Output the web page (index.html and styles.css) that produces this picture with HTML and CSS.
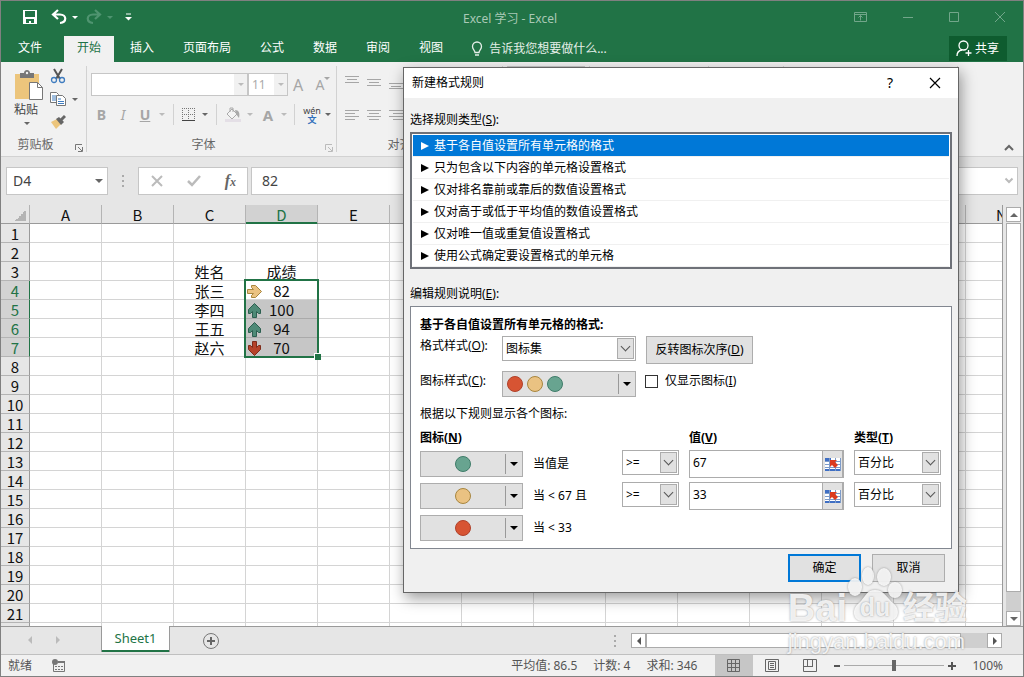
FILE: index.html
```html
<!DOCTYPE html>
<html lang="zh-CN">

<head>
  <meta charset="UTF-8">
  <meta name="viewport" content="width=device-width, initial-scale=1.0">
  <title>Excel 学习 - Excel</title>
  <link rel="stylesheet" href="styles.css">
</head>

<body>
  <div class="app">
    <header class="titlebar">
      <div class="quick-access">
        <button class="icon-btn" aria-label="保存">
          <svg width="16" height="16" viewBox="0 0 16 16"><path d="M1 1h14v14H1z" fill="#fff"/><path d="M3 2h10v6H3zM4 10h8v4H9v-2H7v2H4z" fill="#217346"/></svg>
        </button>
        <button class="icon-btn undo" aria-label="撤消">
          <svg width="16" height="16" viewBox="0 0 16 16"><path d="M7 1L2 5.500l5 4.500M2.500 5.500H9c7 0 7 8 0 8.500" fill="none" stroke="#fff" stroke-width="2.200"/></svg>
          <i class="caret white"></i>
        </button>
        <button class="icon-btn redo" aria-label="恢复">
          <svg width="16" height="16" viewBox="0 0 16 16"><path d="M9 1l5 4.500L9 10M13.500 5.500H7c-7 0-7 8 0 8.500" fill="none" stroke="#4f9470" stroke-width="2.200"/></svg>
          <i class="caret dim"></i>
        </button>
        <button class="icon-btn more" aria-label="自定义快速访问工具栏">
          <svg width="7" height="8" viewBox="0 0 7 8"><path d="M1 1h5" stroke="#fff"/><path d="M0 4h7L3.500 7.500z" fill="#fff"/></svg>
        </button>
      </div>
      <span class="title">Excel 学习 - Excel</span>
      <div class="window-buttons">
        <button class="icon-btn" aria-label="功能区显示选项"><svg width="14" height="12" viewBox="0 0 14 12"><path d="M.5 1.500h12v9H.5zM.5 3.500h12M6.500 9.500v-5M4.500 6.500l2-2 2 2"/></svg></button>
        <button class="icon-btn" aria-label="最小化"><svg width="12" height="12" viewBox="0 0 12 12"><path d="M1 6.500h10"/></svg></button>
        <button class="icon-btn" aria-label="最大化"><svg width="12" height="12" viewBox="0 0 12 12"><path d="M1.500 1.500h9v9h-9z"/></svg></button>
        <button class="icon-btn" aria-label="关闭"><svg width="12" height="12" viewBox="0 0 12 12"><path d="M1 1l10 10M11 1L1 11"/></svg></button>
      </div>
    </header>

    <nav class="tabs">
      <a class="tab file" href="#">文件</a>
      <a class="tab active" href="#">开始</a>
      <a class="tab" href="#">插入</a>
      <a class="tab" href="#">页面布局</a>
      <a class="tab" href="#">公式</a>
      <a class="tab" href="#">数据</a>
      <a class="tab" href="#">审阅</a>
      <a class="tab" href="#">视图</a>
      <a class="tell-me" href="#">
        <svg width="12" height="16" viewBox="0 0 12 16"><path d="M4 11.500c0-2-2.500-3-2.500-6a4.500 4.500 0 0 1 9 0c0 3-2.500 4-2.500 6zM4 14h4" fill="none" stroke="#e4efe8" stroke-width="1.300"/></svg>
        告诉我您想要做什么...
      </a>
      <button class="share">
        <svg width="16" height="17" viewBox="0 0 16 17"><circle cx="7.500" cy="5.500" r="4.500"/><path d="M1 16c0-3.500 2-5.500 5-6M12.500 10v6M9.500 13h6"/></svg>
        共享
      </button>
    </nav>

    <section class="ribbon">
      <div class="group clipboard">
        <div class="tools">
          <button class="paste">
            <svg width="30" height="31" viewBox="0 0 30 31"><path d="M1 4h24v25H1z" fill="#ecc57c"/><path d="M6 3h4c0-4 6-4 6 0h4v5H6z" fill="#777"/><circle cx="13" cy="3" r="1.200" fill="#f1f1f1"/><path d="M15.500 12.500h8l5 5v12h-13z" fill="#fff" stroke="#777"/><path d="M23.500 12.500v5h5" fill="none" stroke="#777"/></svg>
            <span>粘贴</span>
            <i class="caret"></i>
          </button>
          <div class="clip-list">
            <button class="icon-btn" aria-label="剪切"><svg width="16" height="16" viewBox="0 0 16 16"><path d="M4 1l6 10M12 1L6 11" stroke="#555" stroke-width="2"/><circle cx="4" cy="12" r="2.500" fill="none" stroke="#3f7cbf" stroke-width="1.300"/><circle cx="12" cy="12" r="2.500" fill="none" stroke="#3f7cbf" stroke-width="1.300"/></svg></button>
            <button class="icon-btn" aria-label="复制"><svg width="16" height="16" viewBox="0 0 16 16"><path d="M.5 1.500h6l2 2v8h-8z" fill="#fff" stroke="#777"/><path d="M2 5h4M2 7h4M2 9h4" stroke="#3f7cbf"/><path d="M6.500 4.500h6l3 3v7h-9z" fill="#fff" stroke="#777"/><path d="M8 8h3M8 10.500h6M8 12.500h6" stroke="#3f7cbf"/></svg><i class="caret"></i></button>
            <button class="icon-btn" aria-label="格式刷"><svg width="16" height="16" viewBox="0 0 16 16"><path d="M1 8l6-3 4 5-5 5z" fill="#ecc57c"/><path d="M6 5l3-2 5 5-3 3z" fill="#666"/><path d="M11 6l4-4" stroke="#666" stroke-width="3"/></svg></button>
          </div>
        </div>
        <div class="group-name">剪贴板<svg class="launcher" width="8" height="8" viewBox="0 0 8 8"><path d="M.5 6V.5H7M3 3l4 4M7.500 3v4.500H3"/></svg></div>
      </div>

      <div class="group font">
        <div class="tools">
          <div class="tool-row">
            <div class="combo name"><input type="text" aria-label="字体名称"><span class="combo-arrow"><i class="caret light"></i></span></div>
            <div class="combo size"><input type="text" value="11" aria-label="字号"><span class="combo-arrow"><i class="caret light"></i></span></div>
            <button class="letter grow">A<i class="caret mark flip"></i></button>
            <button class="letter shrink">A<i class="caret mark"></i></button>
          </div>
          <div class="tool-row second">
            <button class="letter b">B</button>
            <button class="letter i">I</button>
            <button class="letter u">U</button>
            <i class="caret light"></i>
            <span class="line"></span>
            <button class="icon-btn" aria-label="边框"><svg width="14" height="14" viewBox="0 0 14 14"><path d="M0 .5h13M0 6.500h13M.5 0v12M6.500 0v12M12.500 0v12" stroke="#777" stroke-dasharray="1 1"/><path d="M0 12.500h13" stroke="#444"/></svg><i class="caret"></i></button>
            <span class="line"></span>
            <button class="icon-btn" aria-label="填充颜色"><svg width="16" height="16" viewBox="0 0 16 16"><path d="M0 12h16v3H0z" fill="#e4dfe6"/><path d="M2 7l5-5 5 5-5 5zM5 5V1h3v4" fill="#f4f4f4" stroke="#aaa"/><path d="M10 3c4 0 5 3 4 8l-3-4z" fill="#aaa"/></svg><i class="caret light"></i></button>
            <button class="letter color">A</button>
            <i class="caret light"></i>
            <span class="line"></span>
            <button class="phonetic"><span class="wen">wén<b>文</b></span><i class="caret"></i></button>
          </div>
        </div>
        <div class="group-name">字体<svg class="launcher light" width="8" height="8" viewBox="0 0 8 8"><path d="M.5 6V.5H7M3 3l4 4M7.500 3v4.500H3"/></svg></div>
      </div>

      <div class="group align">
        <div class="tools">
          <div class="align-icons">
            <svg viewBox="0 0 14 14"><path d="M0 1.500h14M2 4.500h10M0 7.500h14"/></svg>
            <svg viewBox="0 0 14 14"><path d="M0 4.500h14M2 7.500h10M0 10.500h14"/></svg>
            <svg viewBox="0 0 14 14"><path d="M0 8.500h14M2 11.500h10M0 13.500h14"/></svg>
            <svg viewBox="0 0 14 14"><path d="M0 1.500h14M0 4.500h10M0 7.500h14M0 10.500h10"/></svg>
            <svg viewBox="0 0 14 14"><path d="M0 1.500h14M2 4.500h10M0 7.500h14M2 10.500h10"/></svg>
            <svg viewBox="0 0 14 14"><path d="M0 1.500h14M4 4.500h10M0 7.500h14M4 10.500h10"/></svg>
          </div>
        </div>
        <div class="group-name">对齐方式</div>
      </div>
      <div class="group number"><div class="combo format"><i class="caret light"></i></div></div>
      <div class="group styles"></div>
      <div class="group cells"></div>
      <div class="group editing"></div>
      <button class="icon-btn collapse" aria-label="折叠功能区"><svg width="10" height="8" viewBox="0 0 10 8"><path d="M1 6l4-4 4 4" fill="none" stroke="#666" stroke-width="2"/></svg></button>
    </section>

    <section class="formula-row">
      <div class="name-box"><input type="text" value="D4" aria-label="名称框"><i class="caret big"></i></div>
      <span class="dots"></span>
      <div class="formula-buttons">
        <button class="icon-btn" aria-label="取消输入"><svg width="12" height="12" viewBox="0 0 12 12"><path d="M1 1l10 10M11 1L1 11" stroke="#bbb" stroke-width="2"/></svg></button>
        <button class="icon-btn" aria-label="输入"><svg width="14" height="12" viewBox="0 0 14 12"><path d="M1 6l4 4 8-9" fill="none" stroke="#bbb" stroke-width="2.500"/></svg></button>
        <button class="fx">f<small>x</small></button>
      </div>
      <div class="formula-box">
        <input type="text" value="82" aria-label="编辑栏">
        <svg width="10" height="8" viewBox="0 0 10 8"><path d="M1.500 1.500L5 5l3.500-3.500" fill="none" stroke="#bbb" stroke-width="2"/></svg>
      </div>
    </section>

    <main class="sheet-area">
      <div class="sheet">
        <table class="cells-table">
          <thead><tr id="columns"></tr></thead>
          <tbody id="rows"></tbody>
        </table>
      </div>
      <div class="vscroll">
        <button class="arrow-btn" aria-label="向上滚动"><i class="tri up"></i></button>
        <span class="thumb"></span>
        <span class="track"></span>
        <button class="arrow-btn" aria-label="向下滚动"><i class="tri down"></i></button>
      </div>
    </main>

    <section class="sheet-tabs">
      <div class="tab-nav"><i class="tri left light"></i><i class="tri right light"></i></div>
      <a class="sheet-tab" href="#">Sheet1</a>
      <button class="icon-btn add" aria-label="新工作表"><svg width="18" height="18" viewBox="0 0 18 18"><circle cx="9" cy="9" r="7.500" fill="none" stroke="#777"/><path d="M9 5v8M5 9h8" stroke="#666" stroke-width="2"/></svg></button>
      <span class="dots"></span>
      <div class="hscroll">
        <button class="arrow-btn" aria-label="向左滚动"><i class="tri left"></i></button>
        <span class="thumb"></span>
        <span class="track"></span>
        <button class="arrow-btn" aria-label="向右滚动"><i class="tri right"></i></button>
      </div>
    </section>

    <footer class="status">
      <span>就绪</span>
      <svg class="macro" width="14" height="14" viewBox="0 0 14 14"><path d="M1.500 4v8.500h11v-10H6" fill="none" stroke="#777"/><path d="M6 2h7v2H6z" fill="#777"/><circle cx="3" cy="3" r="3" fill="#777"/><path d="M3 7.500h9M3 10.500h9" stroke="#777" stroke-dasharray="2 1"/></svg>
      <div class="stats"><span>平均值: 86.5</span><span>计数: 4</span><span>求和: 346</span></div>
      <button class="view active" aria-label="普通"><svg width="14" height="14" viewBox="0 0 14 14"><path d="M.5 .5h12v12H.5zM4.500 0v13M8.500 0v13M0 4.500h13M0 8.500h13"/></svg></button>
      <button class="view" aria-label="页面布局"><svg width="14" height="14" viewBox="0 0 14 14"><path d="M.5 .5h13v12H.5zM3.500 2.500h7v8h-7zM5 4.500h4M5 6.500h4M5 8.500h4"/></svg></button>
      <button class="view" aria-label="分页预览"><svg width="14" height="14" viewBox="0 0 14 14"><path d="M.5 .5h13v12H.5zM4.500 0v7.500M9.500 0v7.500M0 7.500h10"/></svg></button>
      <button class="zoom-btn" aria-label="缩小"><svg width="8" height="8" viewBox="0 0 8 8"><path d="M1 4h6"/></svg></button>
      <input type="range" class="zoom" min="10" max="190" value="100" aria-label="缩放">
      <button class="zoom-btn" aria-label="放大"><svg width="8" height="8" viewBox="0 0 8 8"><path d="M0 4h8M4 0v8"/></svg></button>
      <span class="percent">100%</span>
    </footer>
  </div>

  <div class="dialog" role="dialog" aria-labelledby="dialog-title">
    <div class="dialog-title">
      <span id="dialog-title">新建格式规则</span>
      <button class="help">?</button>
      <button class="close" aria-label="关闭"><svg width="12" height="12" viewBox="0 0 12 12"><path d="M1 1l10 10M11 1L1 11" stroke="#000" stroke-width="1.200"/></svg></button>
    </div>
    <div class="dialog-body">
      <p class="caption">选择规则类型(<u>S</u>):</p>
      <ul class="rule-types">
        <li class="selected">基于各自值设置所有单元格的格式</li>
        <li>只为包含以下内容的单元格设置格式</li>
        <li>仅对排名靠前或靠后的数值设置格式</li>
        <li>仅对高于或低于平均值的数值设置格式</li>
        <li>仅对唯一值或重复值设置格式</li>
        <li>使用公式确定要设置格式的单元格</li>
      </ul>
      <p class="caption second">编辑规则说明(<u>E</u>):</p>
      <div class="panel">
        <h2>基于各自值设置所有单元格的格式:</h2>
        <div class="field-row">
          <label for="format-style">格式样式(<u>O</u>):</label>
          <div class="select"><select id="format-style"><option>图标集</option></select><span class="chevron"></span></div>
          <button class="btn reverse">反转图标次序(<u>D</u>)</button>
        </div>
        <div class="field-row icons-row">
          <label for="icon-style">图标样式(<u>C</u>):</label>
          <button class="icon-select wide" id="icon-style"><span class="balls"><i class="ball red"></i><i class="ball yellow"></i><i class="ball green"></i></span><span class="drop"></span></button>
          <label class="check"><input type="checkbox"><span>仅显示图标(<u>I</u>)</span></label>
        </div>
        <p class="hint">根据以下规则显示各个图标:</p>
        <div class="rules heads">
          <label for="icon-1">图标(<u>N</u>)</label>
          <label class="value-head" for="value-1">值(<u>V</u>)</label>
          <label for="type-1">类型(<u>T</u>)</label>
        </div>
        <div class="rules">
          <button class="icon-select" id="icon-1"><span class="balls"><i class="ball green"></i></span><span class="drop"></span></button>
          <span class="when">当值是</span>
          <div class="select"><select aria-label="运算符"><option>&gt;=</option></select><span class="chevron"></span></div>
          <div class="ref-input"><input type="text" id="value-1" value="67"><button aria-label="选择区域"><svg class="ref" width="16" height="15" viewBox="0 0 16 15"><path d="M0 1h16v13H0z" fill="#fff"/><path d="M0 1h6v3H0zM0 12h16v2H0z" fill="#3f6fc4"/><path d="M0 4.500h16M0 7.500h16M0 10.500h16M4.500 1v13M10.500 1v13M15.500 1v13" stroke="#7d9bc9"/><path d="M5 3h7l-2 2 3 3-3 3-3-3-2 2z" fill="#dc3a1e"/></svg></button></div>
          <div class="select"><select id="type-1"><option>百分比</option></select><span class="chevron"></span></div>

          <button class="icon-select" aria-label="图标 2"><span class="balls"><i class="ball yellow"></i></span><span class="drop"></span></button>
          <span class="when">当 &lt; 67 且</span>
          <div class="select"><select aria-label="运算符"><option>&gt;=</option></select><span class="chevron"></span></div>
          <div class="ref-input"><input type="text" value="33" aria-label="值 2"><button aria-label="选择区域"><svg class="ref" width="16" height="15" viewBox="0 0 16 15"><path d="M0 1h16v13H0z" fill="#fff"/><path d="M0 1h6v3H0zM0 12h16v2H0z" fill="#3f6fc4"/><path d="M0 4.500h16M0 7.500h16M0 10.500h16M4.500 1v13M10.500 1v13M15.500 1v13" stroke="#7d9bc9"/><path d="M5 3h7l-2 2 3 3-3 3-3-3-2 2z" fill="#dc3a1e"/></svg></button></div>
          <div class="select"><select aria-label="类型 2"><option>百分比</option></select><span class="chevron"></span></div>

          <button class="icon-select" aria-label="图标 3"><span class="balls"><i class="ball red"></i></span><span class="drop"></span></button>
          <span class="when">当 &lt; 33</span>
        </div>
      </div>
      <div class="actions">
        <button class="btn primary">确定</button>
        <button class="btn">取消</button>
      </div>
    </div>
  </div>

  <div class="watermark">
    <div class="brand">
      <span>Bai</span>
      <span class="paw">
        <svg width="56" height="56" viewBox="0 0 56 56"><ellipse cx="8" cy="21" rx="7" ry="9"/><ellipse cx="21" cy="10" rx="6" ry="9"/><ellipse cx="37" cy="11" rx="7" ry="9"/><ellipse cx="48" cy="24" rx="7" ry="8"/><path d="M28 24c-9 0-10 8-16 13-8 6-6 18 3 18h27c10 0 12-12 4-18-6-5-9-13-18-13z"/></svg>
        <em>du</em>
      </span>
      <span class="cn">经验</span>
    </div>
    <div class="site">jingyan.baidu.com</div>
  </div>

  <script src="script.js"></script>
</body>

</html>
```

FILE: styles.css
```css
* {
  box-sizing: border-box;
}

body {
  margin: 0;
  font: 12px/16px "Noto Sans", "Noto Sans CJK SC", sans-serif;
  color: #444;
  overflow: hidden;
}

button,
input,
select {
  font: inherit;
  color: inherit;
  margin: 0;
  padding: 0;
  border: 0;
  background: none;
  border-radius: 0;
}

input,
select {
  min-width: 0;
  outline: 0;
}

a {
  color: inherit;
  text-decoration: none;
}

p,
h2,
ul {
  margin: 0;
  padding: 0;
}

svg {
  display: block;
  flex: none;
}

.app {
  display: flex;
  flex-direction: column;
  height: 100vh;
  border: 1px solid #808080;
  background: #e6e6e6;
}

.icon-btn {
  display: flex;
  align-items: center;
}

.caret {
  flex: none;
  border: 3px solid transparent;
  border-top-color: #666;
  border-bottom: 0;
}

.caret.big {
  border-width: 4px 4px 0;
}

.caret.light {
  border-top-color: #bbb;
}

.caret.white {
  border-top-color: #fff;
}

.caret.dim {
  border-top-color: #4f9470;
}

/* title bar */
.titlebar {
  display: grid;
  grid-template-columns: 1fr auto 1fr;
  align-items: center;
  height: 35px;
  flex: none;
  padding: 0 25px 3px 21px;
  background: #217346;
}

.quick-access {
  display: flex;
  align-items: center;
}

.quick-access .icon-btn {
  gap: 5px;
}

.undo {
  margin-left: 13px;
}

.redo {
  margin-left: 8px;
}

.more {
  margin-left: 12px;
}

.title {
  color: #a9c9b6;
  padding-top: 4px;
}

.window-buttons {
  display: flex;
  justify-content: flex-end;
  gap: 34px;
  margin-right: -8px;
}

.window-buttons path {
  fill: none;
  stroke: #72a68a;
}

/* ribbon tabs */
.tabs {
  display: flex;
  gap: 3px;
  height: 26px;
  flex: none;
  padding-right: 16px;
  background: #217346;
  color: #fff;
}

.tab {
  padding: 4px 13px;
}

.tab.file {
  padding: 4px 19px 4px 17px;
}

.tab.active {
  background: #f1f1f1;
  color: #217346;
}

.tell-me {
  display: flex;
  align-items: center;
  gap: 6px;
  margin-left: 12px;
  color: #e4efe8;
}

.share {
  display: flex;
  align-items: center;
  gap: 3px;
  margin-left: auto;
  width: 58px;
  height: 25px;
  padding: 0 7px;
  background: #0e5c2f;
  white-space: nowrap;
}

.share svg {
  fill: none;
  stroke: #fff;
  stroke-width: 1.3;
}

/* ribbon */
.ribbon {
  display: flex;
  height: 95px;
  flex: none;
  padding: 4px 0;
  background: #f1f1f1;
  border-bottom: 1px solid #d2d2d2;
}

.group {
  display: flex;
  flex-direction: column;
  flex: none;
  border-right: 1px solid #d2d2d2;
}

.clipboard {
  width: 86px;
}

.font {
  width: 250px;
}

.align {
  width: 166px;
}

.number {
  width: 87px;
  padding: 0 4px;
}

.styles {
  width: 119px;
}

.cells {
  width: 75px;
}

.editing {
  width: 174px;
}

.tools {
  flex: 1;
}

.clipboard .tools {
  display: flex;
}

.group-name {
  display: flex;
  justify-content: center;
  position: relative;
  height: 15px;
  margin: 0 3px 0 1px;
  padding-right: 14px;
  color: #666;
}

.launcher {
  position: absolute;
  right: 0;
  bottom: 0;
  fill: none;
  stroke: #777;
}

.launcher.light {
  stroke: #bbb;
}

.paste {
  display: flex;
  flex-direction: column;
  align-items: center;
  align-self: flex-start;
  width: 26px;
  margin: 4px 0 0 13px;
}

.paste svg {
  margin-left: 4px;
}

.paste span {
  margin: 1px 2px 0 0;
  white-space: nowrap;
}

.paste .caret {
  margin-top: 4px;
}

.clip-list {
  display: flex;
  flex-direction: column;
  align-items: flex-start;
  gap: 7px;
  margin: 2px 0 0 10px;
}

.clip-list .icon-btn {
  gap: 6px;
}

.tool-row {
  display: flex;
  align-items: center;
  height: 23px;
  margin: 7px 0 0 4px;
}

.tool-row.second {
  margin: 7px 0 0 9px;
}

.combo {
  display: flex;
  align-items: center;
  height: 23px;
  border: 1px solid #c6c6c6;
  background: #fff;
}

.combo-arrow {
  display: flex;
  align-items: center;
  justify-content: center;
  flex: none;
  width: 13px;
  height: 21px;
  background: #f1f1f1;
}

.combo input {
  flex: 1;
  padding-left: 3px;
  color: #aaa;
}

.combo.name {
  width: 157px;
}

.combo.size {
  width: 40px;
}

.combo.format {
  justify-content: flex-end;
  padding-right: 4px;
}

.letter {
  font-size: 14px;
  color: #a6a6a6;
  width: 22px;
  text-align: center;
  white-space: nowrap;
}

.grow,
.shrink {
  display: flex;
  align-items: flex-start;
  justify-content: center;
}

.letter.grow {
  font-size: 16px;
  margin-left: 2px;
}

.mark {
  border-width: 3px 3px 0;
  border-top-color: #a6a6a6;
}

.flip {
  border-width: 0 3px 3px;
  border-color: transparent transparent #a6a6a6;
}

.letter.b {
  width: 11px;
  margin-right: 5px;
  font-weight: bold;
}

.letter.i {
  font-style: italic;
}

.letter.u {
  text-decoration: underline;
  font-weight: bold;
}

.letter.u + .caret {
  margin: 0 8px 0 3px;
}

.letter.color {
  width: 16px;
  margin-left: 7px;
  font-size: 15px;
  font-weight: bold;
}

.letter.color + .caret {
  margin: 0 7px 0 5px;
}

.line {
  width: 1px;
  height: 21px;
  margin-right: 8px;
  background: #d2d2d2;
}

.second .icon-btn {
  gap: 6px;
}

.second .icon-btn + .line {
  margin-left: 8px;
}

.phonetic {
  display: flex;
  align-items: center;
  gap: 4px;
}

.wen {
  font-size: 9px;
  line-height: 9px;
  width: 18px;
}

.wen b {
  display: block;
  color: #2f6fba;
}

.align-icons {
  display: grid;
  grid-template-columns: repeat(3, 14px);
  gap: 20px 8px;
  padding: 9px 8px;
}

.align-icons path {
  fill: none;
  stroke: #a6a6a6;
}

.collapse {
  align-self: flex-end;
  margin: 0 9px 0 auto;
}

/* formula bar */
.formula-row {
  display: flex;
  flex: none;
  padding: 10px 5px;
  height: 48px;
  font-size: 14px;
}

.name-box,
.formula-buttons,
.formula-box {
  display: flex;
  align-items: center;
  height: 28px;
  background: #fff;
  border: 1px solid #c6c6c6;
}

.name-box {
  width: 102px;
  padding: 0 4px 0 6px;
}

.name-box input,
.formula-box input {
  flex: 1;
}

.dots {
  width: 2px;
  height: 12px;
  align-self: center;
  background: repeating-linear-gradient(#aaa 0 2px, transparent 2px 5px);
}

.formula-row .dots {
  margin: 0 14px;
}

.formula-buttons {
  width: 110px;
  justify-content: space-between;
  padding: 0 11px 0 12px;
  margin-right: 3px;
}

.fx {
  font: italic bold 16px/16px "Liberation Serif", serif;
  color: #666;
}

.fx small {
  font-size: 12px;
}

.formula-box {
  flex: 1;
  padding: 0 3px 0 10px;
}

/* sheet */
.sheet-area {
  display: flex;
  flex: 1;
  min-height: 0;
}

.sheet {
  flex: 1;
  min-width: 0;
  overflow: hidden;
  border-right: 1px solid #9a9a9a;
}

.cells-table {
  width: 1037px;
  table-layout: fixed;
  border-spacing: 0;
  font: 15px/16px "Noto Sans CJK SC", sans-serif;
  color: #111;
}

.cells-table th,
.cells-table td {
  width: 72px;
  height: 19px;
  padding: 2px 0 0;
  font-weight: normal;
  text-align: center;
  white-space: nowrap;
  border-right: 1px solid #d4d4d4;
  border-bottom: 1px solid #d4d4d4;
  background: #fff;
}

.cells-table th {
  background: #e6e6e6;
  border-right-color: #b4b4b4;
  border-bottom-color: #9a9a9a;
}

.cells-table tbody th {
  border-right-color: #9a9a9a;
  border-bottom-color: #b4b4b4;
}

.cells-table th:first-child {
  width: 29px;
}

.cells-table th.on {
  background: #d2d2d2;
  color: #217346;
}

.cells-table thead th.on {
  box-shadow: inset 0 -1px #217346;
  border-bottom-color: #217346;
}

.cells-table tbody th.on {
  border-right-color: #217346;
}

.corner i {
  display: block;
  width: 11px;
  height: 11px;
  margin: 0 3px 0 auto;
  background: linear-gradient(135deg, transparent 50%, #b4b4b4 50%);
}

.cells-table td.picked {
  background: #c6c6c6;
  border-bottom-color: #aaa;
}

.cells-table td.start {
  position: relative;
}

.icon-cell {
  display: grid;
  grid-template-columns: 15px 1fr 15px;
  align-items: end;
  height: 16px;
  padding: 0 1px;
}

.selection {
  position: absolute;
  z-index: 1;
  top: -2px;
  left: -2px;
  width: 75px;
  height: 79px;
  border: 2px solid #217346;
}

.selection::after {
  content: "";
  position: absolute;
  right: -4px;
  bottom: -4px;
  width: 6px;
  height: 6px;
  background: #217346;
  border: solid #fff;
  border-width: 1px 0 0 1px;
}

/* scroll bars */
.vscroll {
  display: flex;
  flex-direction: column;
  width: 15px;
  margin: 2px 2px 0 3px;
}

.arrow-btn {
  display: flex;
  align-items: center;
  justify-content: center;
  flex: none;
  width: 15px;
  height: 15px;
  background: #fff;
  border: 1px solid #ababab;
}

.tri {
  border: 4px solid transparent;
}

.tri.up {
  border-top: 0;
  border-bottom-color: #666;
}

.tri.down {
  border-bottom: 0;
  border-top-color: #666;
}

.tri.left {
  border-left: 0;
  border-right-color: #555;
}

.tri.right {
  border-right: 0;
  border-left-color: #555;
}

.tri.left.light {
  border-right-color: #bbb;
}

.tri.right.light {
  border-left-color: #bbb;
}

.thumb {
  background: #fff;
  border: 1px solid #ababab;
}

.track {
  background: #cfcfcf;
}

.vscroll .thumb {
  flex: 19;
  margin-top: 1px;
}

.vscroll .track {
  flex: 1;
}

.sheet-tabs {
  display: flex;
  flex: none;
  height: 29px;
  padding-right: 21px;
  border-top: 1px solid #9a9a9a;
  border-bottom: 1px solid #c0c0c0;
}

.tab-nav {
  display: flex;
  align-items: flex-start;
  gap: 24px;
  width: 100px;
  padding: 9px 0 0 27px;
}

.sheet-tab {
  width: 69px;
  height: 26px;
  margin-top: -1px;
  padding-top: 4px;
  font-size: 13px;
  text-align: center;
  color: #217346;
  background: #fff;
  border: solid #9a9a9a;
  border-width: 0 1px;
  box-shadow: inset 0 -2px #217346;
}

.add {
  margin-left: 32px;
}

.sheet-tabs .dots {
  margin: 0 15px 0 auto;
}

.hscroll {
  display: flex;
  width: 371px;
  height: 15px;
  margin-top: 6px;
}

.hscroll .thumb {
  flex: 12;
}

.hscroll .track {
  flex: 1;
}

/* status bar */
.status {
  display: flex;
  align-items: center;
  flex: none;
  height: 21px;
  padding-left: 7px;
  background: #f1f1f1;
  color: #555;
}

.macro {
  margin-left: 20px;
}

.stats {
  display: flex;
  gap: 16px;
  margin: 0 18px 0 auto;
}

.view {
  display: flex;
  align-items: center;
  justify-content: center;
  width: 38px;
  height: 21px;
}

.view.active {
  background: #c6c6c6;
}

.view path {
  fill: none;
  stroke: #666;
}

.zoom-btn {
  margin-left: 4px;
}

.zoom-btn path {
  stroke: #555;
  stroke-width: 2;
}

.zoom {
  appearance: none;
  width: 100px;
  height: 12px;
  margin: 0 0 0 3px;
  background: linear-gradient(#aaa, #aaa) center / 100% 1px no-repeat;
}

.zoom::-webkit-slider-thumb {
  appearance: none;
  width: 4px;
  height: 11px;
  background: #666;
}

.percent {
  margin: 0 20px 0 16px;
}

/* dialog window */
.dialog {
  position: absolute;
  left: 403px;
  top: 67px;
  width: 556px;
  border: 1px solid #666;
  background: #f0f0f0;
  color: #000;
  box-shadow: 2px 5px 14px rgba(0, 0, 0, 0.4);
}

.dialog-title {
  display: flex;
  align-items: center;
  height: 30px;
  padding: 0 17px 0 8px;
  background: #fff;
}

.help {
  margin: 0 36px 0 auto;
  font-size: 14px;
}

.dialog-body {
  padding: 14px 6px 10px;
}

.caption {
  margin-bottom: 4px;
}

.caption.second {
  margin-top: 17px;
}

.rule-types {
  list-style: none;
  padding: 1px 1px 0;
  background: #fff;
  border: 2px solid #6e7178;
}

.rule-types li {
  height: 22px;
  padding: 3px 8px 0;
  border-bottom: 1px solid #f0f0f0;
}

.rule-types li::before {
  content: "";
  display: inline-block;
  margin-right: 5px;
  border: 4px solid transparent;
  border-left: 8px solid #000;
  border-right: 0;
}

.rule-types .selected {
  background: #0078d7;
  color: #fff;
}

.rule-types .selected::before {
  border-left-color: #fff;
}

.panel {
  padding: 10px 10px 6px 9px;
  background: #fff;
  border: 1px solid #828790;
}

.panel h2 {
  font-size: 12px;
  line-height: 16px;
}

.field-row {
  display: grid;
  grid-template-columns: 82px 134px auto 1fr;
  align-items: start;
  height: 28px;
  margin-top: 3px;
}

.field-row label {
  margin-top: 2px;
}

.icons-row {
  height: 26px;
  margin-top: 7px;
}

.select {
  position: relative;
  height: 25px;
  border: 1px solid #acacac;
}

.select select {
  appearance: none;
  width: 100%;
  height: 100%;
  padding-left: 3px;
}

.chevron {
  position: absolute;
  top: 1px;
  right: 1px;
  bottom: 1px;
  display: flex;
  align-items: center;
  justify-content: center;
  width: 17px;
  background: #e1e1e1;
  border: 1px solid #acacac;
  pointer-events: none;
}

.chevron::before {
  content: "";
  width: 6px;
  height: 6px;
  margin-bottom: 4px;
  border: solid #555;
  border-width: 0 1px 1px 0;
  transform: rotate(45deg);
}

.btn {
  width: 73px;
  height: 28px;
  background: #e1e1e1;
  border: 1px solid #adadad;
}

.reverse {
  width: 107px;
  margin-left: 10px;
}

.icon-select {
  display: flex;
  align-items: center;
  height: 26px;
  background: #e1e1e1;
  border: 1px solid #adadad;
}

.balls {
  display: flex;
  justify-content: center;
  flex: 1;
  gap: 4px;
}

.wide .balls {
  justify-content: flex-start;
  padding-left: 4px;
}

.ball {
  width: 16px;
  height: 16px;
  border: 1px solid;
  border-radius: 50%;
}

.ball.red {
  background: #d75433;
  border-color: #b0412a;
}

.ball.yellow {
  background: #eac282;
  border-color: #a8863f;
}

.ball.green {
  background: #68a490;
  border-color: #3f7c69;
}

.drop {
  display: flex;
  align-items: center;
  justify-content: center;
  width: 17px;
  height: 20px;
  border-left: 1px solid #999;
}

.drop::before {
  content: "";
  border: 4px solid transparent;
  border-top-color: #000;
  border-bottom: 0;
}

.check {
  display: flex;
  align-items: center;
  gap: 7px;
  margin-left: 9px;
}

.check input {
  appearance: none;
  width: 13px;
  height: 13px;
  border: 1px solid #333;
}

.hint {
  margin-top: 9px;
}

.rules {
  display: grid;
  grid-template-columns: 103px 79px 57px minmax(0, 1fr) 87px;
  grid-auto-rows: 28px;
  align-items: start;
  gap: 4px 10px;
  margin-top: 4px;
}

.rules.heads {
  grid-auto-rows: 16px;
  margin-top: 8px;
  font-weight: bold;
}

.value-head {
  grid-column: 4;
}

.rules .icon-select {
  align-self: center;
}

.when {
  align-self: center;
  white-space: pre;
}

.ref-input {
  display: flex;
  height: 28px;
  border: 1px solid #acacac;
}

.ref-input input {
  flex: 1;
  padding: 0 3px 2px;
}

.ref-input button {
  flex: none;
  width: 21px;
  padding-left: 2px;
  background: #e1e1e1;
  border: solid #acacac;
  border-width: 0 1px 0 1px;
}

.actions {
  display: flex;
  justify-content: flex-end;
  gap: 11px;
  margin: 5px 7px 0 0;
}

.primary {
  border: 2px solid #0078d7;
}

/* watermark */
.watermark {
  position: absolute;
  right: 57px;
  bottom: 22px;
  color: rgba(255, 255, 255, 0.85);
  font-family: "Liberation Sans", "Noto Sans CJK SC", sans-serif;
  text-shadow: 0 0 2px rgba(120, 120, 120, 0.8);
  pointer-events: none;
}

.brand {
  display: flex;
  align-items: flex-end;
  margin-bottom: 3px;
  font-size: 38px;
  line-height: 36px;
  font-weight: bold;
}

.paw {
  position: relative;
  margin-bottom: 4px;
}

.paw svg {
  fill: rgba(255, 255, 255, 0.85);
  filter: drop-shadow(0 0 1px rgba(120, 120, 120, 0.8));
}

.paw em {
  position: absolute;
  left: 0;
  right: 0;
  bottom: 0;
  text-align: center;
  font-size: 25px;
  line-height: 30px;
  font-style: normal;
}

.brand .cn {
  font-size: 32px;
}

.site {
  font-size: 22px;
  line-height: 26px;
}
```

FILE: script.js
```js
const columns = 'ABCDEFGHIJKLMN'.split('');
const rowCount = 22;

const values = {
  C3: '姓名', D3: '成绩',
  C4: '张三', D4: '82',
  C5: '李四', D5: '100',
  C6: '王五', D6: '94',
  C7: '赵六', D7: '70'
};

const icons = { D4: 'side', D5: 'up', D6: 'up', D7: 'down' };

const looks = {
  side: { angle: 90, fill: '#eac282', stroke: '#a8863f' },
  up: { angle: 0, fill: '#4f8a77', stroke: '#2d5f50' },
  down: { angle: 180, fill: '#b5432a', stroke: '#7e2c1a' }
};

function arrow(name) {
  const look = looks[name];
  return `<svg width="15" height="15" viewBox="0 0 15 15">
    <path transform="rotate(${look.angle} 7.5 7.5)" d="M7.500 .5L13.500 6.500V10.500H11.500L9.500 8.500V14.500H5.500V8.500L3.500 10.500H1.500V6.500Z"
      fill="${look.fill}" stroke="${look.stroke}"/></svg>`;
}

function cell(id) {
  const text = values[id] || '';
  if (!icons[id]) {
    return `<td>${text}</td>`;
  }
  const first = id === 'D4';
  const marker = first ? '<span class="selection"></span>' : '';
  return `<td class="${first ? 'start' : 'picked'}">
    <div class="icon-cell">${arrow(icons[id])}<span>${text}</span></div>${marker}</td>`;
}

document.getElementById('columns').innerHTML = '<th class="corner"><i></i></th>' +
  columns.map(c => `<th class="${c === 'D' ? 'on' : ''}">${c}</th>`).join('');

let html = '';
for (let r = 1; r <= rowCount; r++) {
  const on = r >= 4 && r <= 7;
  html += `<tr><th class="${on ? 'on' : ''}">${r}</th>` + columns.map(c => cell(c + r)).join('') + '</tr>';
}
document.getElementById('rows').innerHTML = html;
```
